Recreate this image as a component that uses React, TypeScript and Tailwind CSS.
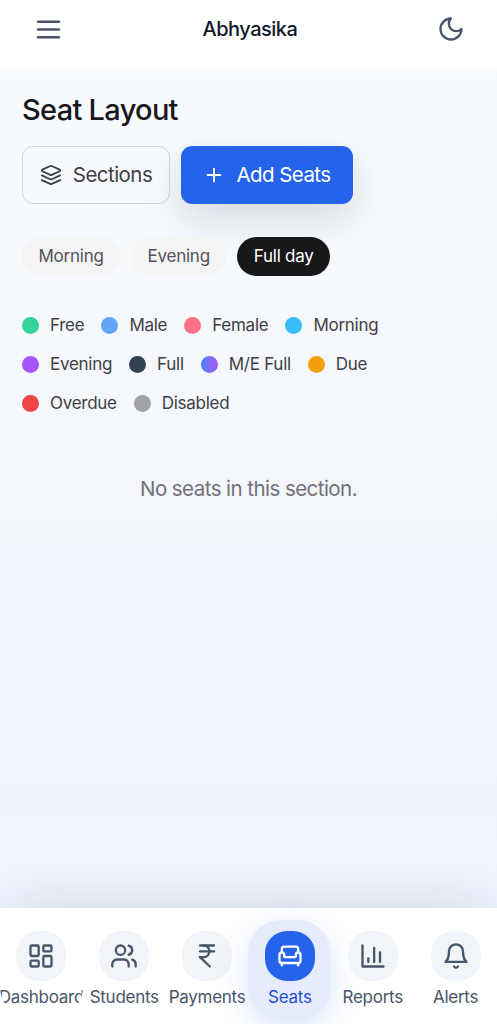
import React from "react";

type IconProps = {
  size?: number;
  strokeWidth?: number;
  className?: string;
  children: React.ReactNode;
};

const Icon = ({ size = 28, strokeWidth = 2, className, children }: IconProps) => (
  <svg
    width={size}
    height={size}
    viewBox="0 0 24 24"
    fill="none"
    stroke="currentColor"
    strokeWidth={strokeWidth}
    strokeLinecap="round"
    strokeLinejoin="round"
    className={className}
  >
    {children}
  </svg>
);

const shifts = [
  { label: "Morning", active: false },
  { label: "Evening", active: false },
  { label: "Full day", active: true },
];

const legend = [
  [
    { label: "Free", color: "bg-[#34d399]" },
    { label: "Male", color: "bg-[#60a5fa]" },
    { label: "Female", color: "bg-[#fb7185]" },
    { label: "Morning", color: "bg-[#38bdf8]" },
  ],
  [
    { label: "Evening", color: "bg-[#a855f7]" },
    { label: "Full", color: "bg-[#334155]" },
    { label: "M/E Full", color: "bg-linear-to-r from-[#3b82f6] to-[#a855f7]" },
    { label: "Due", color: "bg-[#f59e0b]" },
  ],
  [
    { label: "Overdue", color: "bg-[#ef4444]" },
    { label: "Disabled", color: "bg-[#a1a1aa]" },
  ],
];

const navItems = [
  {
    label: "Dashboard",
    icon: (
      <>
        <rect width="7" height="9" x="3" y="3" rx="1" />
        <rect width="7" height="5" x="14" y="3" rx="1" />
        <rect width="7" height="9" x="14" y="12" rx="1" />
        <rect width="7" height="5" x="3" y="16" rx="1" />
      </>
    ),
  },
  {
    label: "Students",
    icon: (
      <>
        <path d="M16 21v-2a4 4 0 0 0-4-4H6a4 4 0 0 0-4 4v2" />
        <circle cx="9" cy="7" r="4" />
        <path d="M22 21v-2a4 4 0 0 0-3-3.87" />
        <path d="M16 3.13a4 4 0 0 1 0 7.75" />
      </>
    ),
  },
  {
    label: "Payments",
    icon: (
      <>
        <path d="M6 3h12" />
        <path d="M6 8h12" />
        <path d="m6 13 8.5 8" />
        <path d="M6 13h3" />
        <path d="M9 13c6.667 0 6.667-10 0-10" />
      </>
    ),
  },
  {
    label: "Seats",
    active: true,
    icon: (
      <>
        <path d="M19 9V6a2 2 0 0 0-2-2H7a2 2 0 0 0-2 2v3" />
        <path d="M3 16a2 2 0 0 0 2 2h14a2 2 0 0 0 2-2v-5a2 2 0 0 0-4 0v1.5a.5.5 0 0 1-.5.5h-9a.5.5 0 0 1-.5-.5V11a2 2 0 0 0-4 0z" />
        <path d="M5 18v2" />
        <path d="M19 18v2" />
      </>
    ),
  },
  {
    label: "Reports",
    icon: (
      <>
        <path d="M3 3v18h18" />
        <path d="M18 17V9" />
        <path d="M13 17V5" />
        <path d="M8 17v-3" />
      </>
    ),
  },
  {
    label: "Alerts",
    icon: (
      <>
        <path d="M6 8a6 6 0 0 1 12 0c0 7 3 9 3 9H3s3-2 3-9" />
        <path d="M10.3 21a1.94 1.94 0 0 0 3.4 0" />
      </>
    ),
  },
];

const Header = () => (
  <header className="flex h-[68px] shrink-0 items-start justify-between bg-white px-[33px] text-[#475569]">
    <button className="mt-[13.5px]">
      <Icon size={31}>
        <path d="M4 6h16" />
        <path d="M4 12h16" />
        <path d="M4 18h16" />
      </Icon>
    </button>
    <h1 className="mt-[14px] mr-px text-[20px] leading-[30px] font-medium tracking-[-0.5px] text-[#0f172a]">
      Abhyasika
    </h1>
    <button className="mt-[15px] -mr-px">
      <Icon>
        <path d="M12 3a6 6 0 0 0 9 9 9 9 0 1 1-9-9Z" />
      </Icon>
    </button>
  </header>
);

const BottomNav = () => (
  <nav className="z-10 flex h-[116px] shrink-0 bg-white pt-3 shadow-[0_-14px_50px_-14px_rgba(25,28,15,0.14)]">
    {navItems.map((item) => (
      <a
        key={item.label}
        href="#"
        className={`flex h-[100px] min-w-0 flex-1 flex-col items-center overflow-hidden rounded-[33px] pt-[11px] ${
          item.active
            ? "bg-[#e6ecfe] text-[#1d4ed8] shadow-[0_10px_32px_rgba(37,99,235,0.17)]"
            : "text-[#475569]"
        }`}
      >
        <span
          className={`flex size-[50px] items-center justify-center rounded-[22px] ${
            item.active ? "bg-[#2563eb] text-white" : "bg-[#f1f5f9]"
          }`}
        >
          <Icon>{item.icon}</Icon>
        </span>
        <span className="mt-[4px] text-[17px] leading-[24px] tracking-[-0.27px]">
          {item.label}
        </span>
      </a>
    ))}
  </nav>
);

export default function App() {
  return (
    <div className="flex h-[1024px] w-[497px] flex-col overflow-hidden bg-linear-to-b from-[#f8fbff] via-[#f3f6fb] to-[#edf3fe] font-['Inter',sans-serif]">
      <Header />

      <main className="flex-1 px-[22px] pt-[22px]">
        <h2 className="text-[29px] leading-[40px] font-medium tracking-[-0.7px] text-[#18181b]">
          Seat Layout
        </h2>

        <div className="mt-[16px] flex gap-[11px] text-[20.5px] tracking-[-0.55px]">
          <button className="flex h-[58px] w-[148px] items-center justify-center gap-[11px] rounded-[11px] border border-[#d4d4d8] text-[#3f3f46]">
            <Icon size={22}>
              <path d="m12.83 2.18a2 2 0 0 0-1.66 0L2.6 6.08a1 1 0 0 0 0 1.83l8.58 3.91a2 2 0 0 0 1.66 0l8.58-3.9a1 1 0 0 0 0-1.83Z" />
              <path d="m22 12.5-9.17 4.16a2 2 0 0 1-1.66 0L2 12.5" />
              <path d="m22 17.5-9.17 4.16a2 2 0 0 1-1.66 0L2 17.5" />
            </Icon>
            Sections
          </button>
          <button className="flex h-[58px] w-[172px] items-center justify-center gap-[11px] rounded-[11px] bg-[#2563eb] text-white shadow-[0_14px_40px_rgba(20,24,28,0.14)]">
            <Icon size={22}>
              <path d="M5 12h14" />
              <path d="M12 5v14" />
            </Icon>
            Add Seats
          </button>
        </div>

        {/* Shift filter */}
        <div className="mt-[33px] flex gap-[11px] text-[17px] tracking-[-0.25px]">
          {shifts.map((shift) => (
            <button
              key={shift.label}
              className={`h-[39px] rounded-full px-[16.5px] ${
                shift.active ? "bg-[#18181b] text-white" : "bg-[#f4f4f5] text-[#52525b]"
              }`}
            >
              {shift.label}
            </button>
          ))}
        </div>

        {/* Status legend */}
        <div className="mt-[37px] flex flex-col gap-[14px] text-[17px] leading-[25px] tracking-[-0.27px] text-[#3f3f46]">
          {legend.map((row, i) => (
            <div key={i} className="flex gap-[17px]">
              {row.map((item) => (
                <div key={item.label} className="flex items-center gap-[11px]">
                  <span className={`size-[17px] rounded-full ${item.color}`} />
                  {item.label}
                </div>
              ))}
            </div>
          ))}
        </div>

        <p className="mt-[59px] text-center text-[20.5px] leading-[28px] tracking-[-0.55px] text-[#71717a]">
          No seats in this section.
        </p>
      </main>

      <BottomNav />
    </div>
  );
}
